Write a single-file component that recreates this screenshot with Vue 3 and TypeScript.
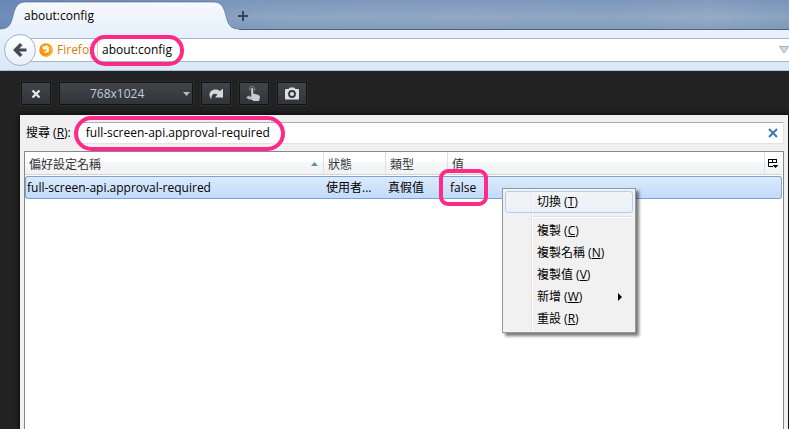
<script setup lang="ts">
import { ref } from 'vue'

interface MenuEntry {
  label: string
  key: string
  active?: boolean
  submenu?: boolean
}

const address = ref('about:config')
const query = ref('full-screen-api.approval-required')
const size = ref('768x1024')

const prefs = [
  { name: 'full-screen-api.approval-required', status: '使用者...', type: '真假值', value: 'false' },
]

const menu: MenuEntry[] = [
  { label: '切換', key: 'T', active: true },
  { label: '複製', key: 'C' },
  { label: '複製名稱', key: 'N' },
  { label: '複製值', key: 'V' },
  { label: '新增', key: 'W', submenu: true },
  { label: '重設', key: 'R' },
]
</script>

<template>
  <div class="browser">
    <header class="tabs">
      <div class="tab">
        <svg class="tab-shape" width="242" height="30" viewBox="0 0 242 30" aria-hidden="true">
          <defs>
            <linearGradient id="tabFill" x1="0" y1="0" x2="0" y2="1">
              <stop offset="0" stop-color="#f6f9fd" />
              <stop offset="1" stop-color="#e9f1fb" />
            </linearGradient>
          </defs>
          <path d="M0 30V29C9 29 11 24 13 16C15 8 17 2 26 2H213C222 2 224 8 226 16C228 24 230 29 239 29V30Z" fill="url(#tabFill)" />
          <path d="M0 29C9 29 11 24 13 16C15 8 17 2 26 2H213C222 2 224 8 226 16C228 24 230 29 239 29" fill="none" stroke="#4c6585" stroke-opacity=".6" />
        </svg>
        <span class="tab-title">about:config</span>
      </div>
      <button class="new-tab" type="button" aria-label="開新分頁">
        <svg width="12" height="12" viewBox="0 0 12 12"><path d="M6 1V11M1 6H11" stroke="#35465c" stroke-width="2" /></svg>
      </button>
    </header>

    <nav class="nav">
      <button class="back" type="button" aria-label="上一頁">
        <svg width="16" height="16" viewBox="0 0 16 16"><path d="M1 8L8 1L10.500 3.200L7.300 6.400H14.500V9.600H7.300L10.500 12.800L8 15Z" fill="#434b54" /></svg>
      </button>
      <div class="urlbar">
        <svg class="fox" width="14" height="14" viewBox="0 0 14 14" aria-hidden="true">
          <circle cx="7" cy="7" r="6.800" fill="#f9930c" />
          <path d="M9 .5C12 2 14 5 13 9C12 12 9 14 6 13.500C10 12 12 9 11.500 6C11 3.500 10 2 9 .5Z" fill="#ffb42c" />
          <path d="M3.200 3L5.500 3.200L7.500 2L10 4L10.300 7.500C9.500 10 6 10.500 4.300 8.500L6.500 8.200L7.800 6.800L5.800 6.500L4 6.800Z" fill="#fff4df" />
        </svg>
        <span class="identity">Firefox</span>
        <div class="address marked">
          <input v-model="address" type="text" aria-label="網址" />
        </div>
        <svg class="history" width="10" height="8" viewBox="0 0 10 8" aria-hidden="true"><path d="M.5 .5H9.500L5 7Z" fill="#d6dbe0" stroke="#a5acb4" /></svg>
      </div>
    </nav>

    <main class="responsive">
      <div class="tools">
        <button type="button" aria-label="關閉">
          <svg width="10" height="10" viewBox="0 0 10 10"><path d="M1.500 1.500L8.500 8.500M8.500 1.500L1.500 8.500" stroke="#e1e4e7" stroke-width="2.400" /></svg>
        </button>
        <div class="size">
          <select v-model="size" aria-label="大小"><option>768x1024</option></select>
          <svg width="7" height="4" viewBox="0 0 7 4" aria-hidden="true"><path d="M0 0H7L3.500 4Z" fill="#b8bcc0" /></svg>
        </div>
        <button type="button" aria-label="旋轉">
          <svg width="16" height="12" viewBox="0 0 16 12"><path d="M3.500 11.500C-.5 7 2 1.500 7.500 1.500C9.500 1.500 11 2.200 12 3L15 .8V9.500H7L9.500 6.500C7 4.500 2.500 6 3.500 11.500Z" fill="#d5d8db" /></svg>
        </button>
        <button type="button" aria-label="模擬觸控">
          <svg width="16" height="18" viewBox="0 0 16 18"><path d="M5.200 4C5.200 2.800 7.200 2.800 7.200 4V8.500L12 9.800C14 10.500 14 11.500 13.800 13L13 16H7.500L3 12.500L5.200 11.500Z" fill="#c8cbce" /><path d="M3.800 5.500C2.500 0 10 0 8.600 5.500" fill="none" stroke="#8b8f93" /><path d="M0 12.500L3 10.500L5 12.500L7 14.500H3Z" fill="#b5b9bc" /></svg>
        </button>
        <button type="button" aria-label="擷圖">
          <svg width="16" height="13" viewBox="0 0 16 13"><path d="M1.500 2H4.500L6 .5H10L11.500 2H14.500L15 3V12L14.500 12.500H1.500L1 12V3Z" fill="#dddfe1" /><circle cx="8" cy="7" r="3" fill="#dddfe1" stroke="#34373b" stroke-width="1.800" /></svg>
        </button>
      </div>

      <section class="page">
        <div class="search">
          <label for="search">搜尋 (<u>R</u>):</label>
          <div class="search-box marked">
            <input id="search" v-model="query" type="text" />
            <button type="button" aria-label="清除">
              <svg width="10" height="10" viewBox="0 0 10 10"><path d="M1 1L9 9M9 1L1 9" stroke="#3b79b4" stroke-width="2" /></svg>
            </button>
          </div>
        </div>

        <div class="tree">
          <table>
            <colgroup><col class="c-name" /><col class="c-status" /><col class="c-type" /><col /><col class="c-pick" /></colgroup>
            <thead>
              <tr>
                <th class="sorted">
                  偏好設定名稱
                  <svg width="7" height="4" viewBox="0 0 7 4" aria-hidden="true"><path d="M0 4L3.500 0L7 4Z" fill="#5c8fae" /></svg>
                </th>
                <th>狀態</th>
                <th>類型</th>
                <th>值</th>
                <th class="pick">
                  <button type="button" aria-label="選擇欄位">
                    <svg width="11" height="11" viewBox="0 0 11 11"><path d="M5 8.500H.5V1.500H8.500V5M0 1.500H9M0 4.500H9M4.500 1V4" fill="none" stroke="#000" /><path d="M4.500 7H10.500L7.500 10Z" /></svg>
                  </button>
                </th>
              </tr>
            </thead>
            <tbody>
              <tr v-for="pref in prefs" :key="pref.name">
                <td>{{ pref.name }}</td>
                <td>{{ pref.status }}</td>
                <td>{{ pref.type }}</td>
                <td colspan="2"><span class="value marked">{{ pref.value }}</span></td>
              </tr>
            </tbody>
          </table>
        </div>
      </section>
    </main>

    <div class="menu" role="menu">
      <template v-for="item in menu" :key="item.key">
        <button type="button" role="menuitem" :class="{ active: item.active }">
          <span>{{ item.label }} (<u>{{ item.key }}</u>)</span>
          <svg v-if="item.submenu" width="4" height="8" viewBox="0 0 4 8" aria-hidden="true"><path d="M0 0L4 4L0 8Z" /></svg>
        </button>
        <hr v-if="item.active" />
      </template>
    </div>
  </div>
</template>

<style>
body {
  margin: 0;
}
</style>

<style scoped>
*,
*::before {
  box-sizing: border-box;
}

.browser {
  position: relative;
  display: flex;
  flex-direction: column;
  min-height: 100vh;
  overflow: hidden;
  color: #000;
  font-family: "Open Sans", "Noto Sans CJK TC", sans-serif;
  font-size: 12px;
  line-height: 16px;
}

button,
input,
select {
  margin: 0;
  padding: 0;
  border: 0;
  background: none;
  color: inherit;
  font: inherit;
  outline: 0;
}

svg {
  display: block;
  flex: none;
}

.marked {
  position: relative;
}

.marked::before {
  content: "";
  position: absolute;
  z-index: 2;
  border: 4px solid #ff2a85;
  border-radius: 15px;
  pointer-events: none;
}

.tabs {
  display: flex;
  height: 30px;
  border-bottom: 1px solid #4c6585;
  background:
    linear-gradient(#6d8bb577, #9fb4ce33 60%, #7590b366),
    linear-gradient(90deg, #6384b5, #8aa2c2 35%, #8fa5c2 60%, #8ba2c0 78%, #94a9c5 90%, #859dbd);
}

.tab {
  position: relative;
  width: 234px;
  height: 30px;
  padding: 8px 24px;
}

.tab-shape {
  position: absolute;
  top: 0;
  left: 0;
}

.tab-title {
  position: relative;
}

.new-tab {
  position: relative;
  display: grid;
  place-items: center;
  width: 18px;
  height: 30px;
  padding-top: 2px;
}

.nav {
  display: flex;
  align-items: center;
  height: 41px;
  padding-left: 4px;
  border-bottom: 1px solid #a9c3dc;
  background: linear-gradient(#e9f1fb, #dae7f7);
}

.back {
  z-index: 1;
  display: grid;
  place-items: center;
  width: 32px;
  height: 32px;
  border: 1px solid #a3b3c5;
  border-radius: 50%;
  background: linear-gradient(#fff, #e9f0f8);
}

.urlbar {
  display: flex;
  flex: 1;
  align-items: center;
  height: 24px;
  margin-left: -6px;
  padding-left: 8px;
  border: 1px solid #a2b6cc;
  border-right: 0;
  background: #fff;
}

.identity {
  width: 40px;
  margin-left: 4px;
  color: #d9800f;
}

.address {
  display: flex;
  flex: 1;
  border-left: 1px solid #f3c795;
  padding-left: 4px;
}

.address::before {
  top: -7px;
  left: -8px;
  width: 94px;
  height: 31px;
}

.address input {
  width: 100%;
}

.responsive {
  display: flex;
  flex: 1;
  flex-direction: column;
  background: #222;
}

.tools {
  display: flex;
  gap: 8px;
  padding: 11px 21px 10px;
}

.tools button,
.size {
  display: grid;
  place-items: center;
  width: 30px;
  height: 23px;
  border: 1px solid #111214;
  background: linear-gradient(#42464b, #303337);
  box-shadow: 0 0 0 1px #2c2d2f;
}

.tools .size {
  display: flex;
  width: 134px;
  padding-right: 2px;
}

.size select {
  flex: 1;
  appearance: none;
  padding-left: 30px;
  color: #c2cdd7;
}

.page {
  display: flex;
  flex: 1;
  flex-direction: column;
  margin: 0 1px 0 20px;
  padding: 7px 4px 0;
  background: #f0f0f0;
  box-shadow: 0 0 6px #000;
}

.search {
  display: flex;
  align-items: center;
  gap: 7px;
  padding-left: 2px;
}

.search-box {
  display: flex;
  flex: 1;
  align-items: center;
  height: 22px;
  padding: 0 5px 0 7px;
  border: 1px solid #e2e3ea;
  border-top-color: #abadb3;
  background: #fff;
}

.search-box::before {
  top: -7px;
  left: -5px;
  width: 211px;
  height: 35px;
  border-radius: 18px;
}

.search-box input {
  flex: 1;
  min-width: 0;
}

.tree {
  flex: 1;
  margin-top: 7px;
  padding-right: 1px;
  border: 1px solid #828790;
  border-bottom: 0;
  background: #fff;
}

table {
  width: 100%;
  table-layout: fixed;
  border-spacing: 0;
}

.c-name {
  width: 299px;
}

.c-status,
.c-type {
  width: 62px;
}

.c-pick {
  width: 17px;
}

th {
  position: relative;
  height: 23px;
  padding: 4px 4px 0;
  border-right: 1px solid #dfe1e4;
  border-bottom: 1px solid #d5d5d5;
  background: linear-gradient(#fff 0 45%, #f7f8fa 45%, #f1f2f4);
  color: #333;
  font-weight: 400;
  text-align: left;
}

.sorted svg {
  position: absolute;
  top: 10px;
  right: 5px;
}

.pick {
  padding: 4px 3px 0;
  border-right: 0;
}

tbody::before {
  content: "";
  display: block;
  height: 1px;
}

td {
  height: 23px;
  padding: 0 2px;
  border: solid #7da2ce;
  border-width: 1px 0;
  background: linear-gradient(#dceafc, #c1dbfc);
  white-space: nowrap;
}

td:first-child {
  border-left-width: 1px;
  border-radius: 3px 0 0 3px;
  padding-left: 1px;
}

td:last-child {
  border-right-width: 1px;
  border-radius: 0 3px 3px 0;
}

.value::before {
  top: -10px;
  left: -11px;
  width: 49px;
  height: 37px;
  border-radius: 9px;
}

.menu {
  position: absolute;
  top: 188px;
  left: 502px;
  z-index: 3;
  width: 134px;
  padding: 2px;
  border: 1px solid #979797;
  background: linear-gradient(90deg, transparent 28px, #e2e3e3 28px 29px, #fff 29px 30px, transparent 30px) #f1f1f1;
  box-shadow: 3px 3px 3px #0008;
}

.menu button {
  display: flex;
  align-items: center;
  justify-content: space-between;
  width: 100%;
  height: 22px;
  padding: 0 11px 0 32px;
  text-align: left;
}

.menu .active {
  border: 1px solid #aecff7;
  border-radius: 3px;
  background: linear-gradient(#f3f6fa80, #e7eff980);
  padding-left: 31px;
}

.menu hr {
  height: 2px;
  margin: 3px 0 2px 28px;
  border: 0;
  border-top: 1px solid #e0e0e0;
  background: #fff;
}
</style>
